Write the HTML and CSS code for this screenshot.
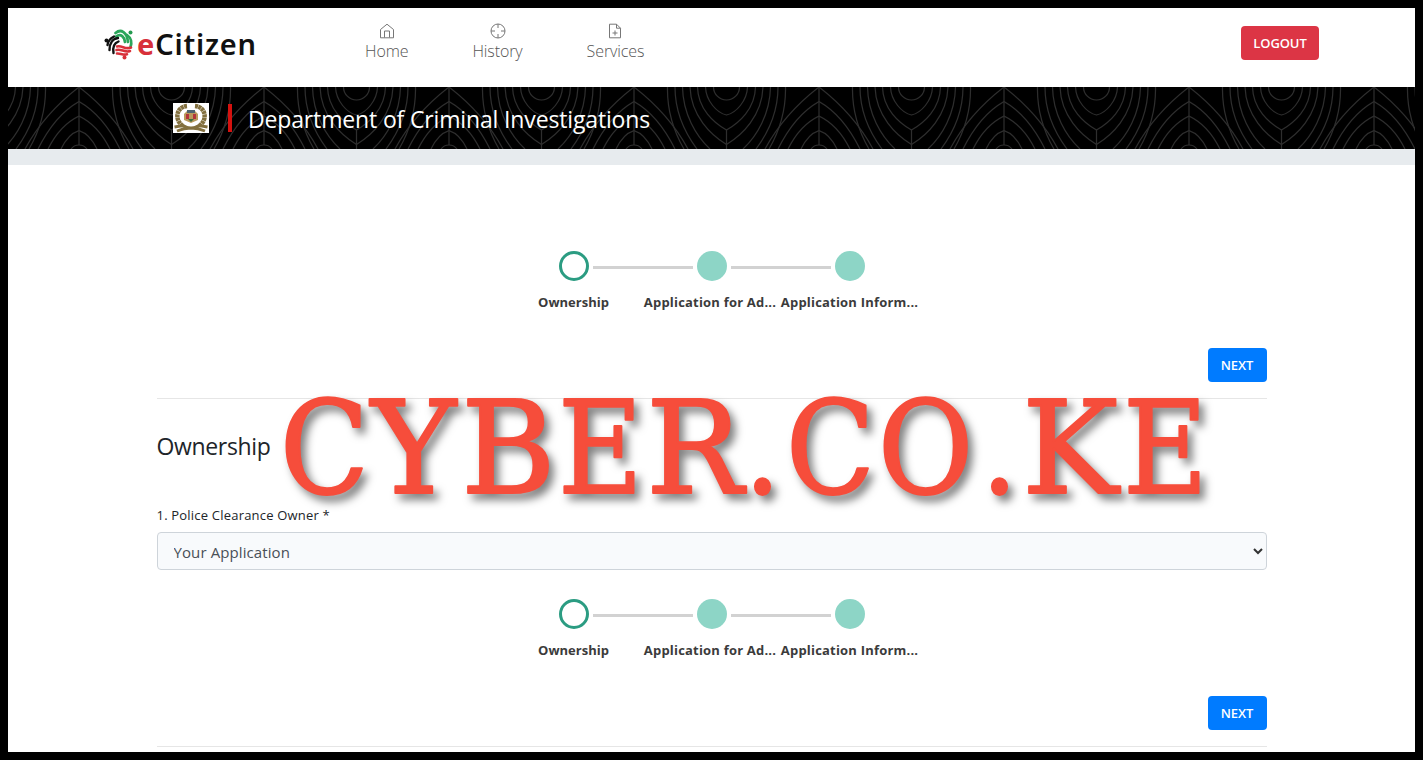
FILE: index.html
```
<!DOCTYPE html>
<html lang="en">
<head>
  <meta charset="UTF-8" />
  <meta name="viewport" content="width=device-width, initial-scale=1.0"/>
  <title>eCitizen - Department of Criminal Investigations</title>
  <link rel="stylesheet" href="styles.css">
</head>
<body>
  <header class="topbar">
    <a href="#" class="logo">
      <svg class="logo-mark" viewBox="0 0 32 32" fill="none" stroke-linecap="round">
        <circle cx="26.500" cy="4.500" r="2" fill="#249a50"/>
        <circle cx="2.500" cy="12.500" r="2" fill="#111"/>
        <circle cx="20.500" cy="29.500" r="2" fill="#d8303a"/>
        <g stroke="#2aa65a" stroke-width="2.700">
          <path d="M11.500 5C17 .5 23 4 24 14"/>
          <path d="M12 8.500C17 5 20.500 9 21 14"/>
          <path d="M23 7C27.500 10 28 15 26.500 19"/>
        </g>
        <g stroke="#111" stroke-width="2.400">
          <path d="M14 10C9 10.500 5.500 15 5.500 22"/>
          <path d="M14.500 13.500C10.500 15 8.500 19 9.500 25"/>
          <path d="M10 8.500C6 10.500 4 13 3.500 17"/>
        </g>
        <g stroke="#d8303a" stroke-width="2.600">
          <path d="M13 18.500C18 17 21 22 27 19.500"/>
          <path d="M12.500 22C17 20.500 21 25 26 23"/>
          <path d="M13 25.500C16 25 19 27.500 23 26.300"/>
        </g>
      </svg>
      <span class="logo-text"><span class="logo-e">e</span>Citizen</span>
    </a>
    <nav class="menu">
      <a href="#">
        <svg viewBox="0 0 16 16"><path d="M1.500 6.500L8 1.200l6.500 5.300v8.300h-13zM5.500 14.500V8h5v6.500"/></svg>
        Home
      </a>
      <a href="#">
        <svg viewBox="0 0 16 16"><circle cx="8" cy="8" r="7"/><path d="M8 1v4M8 11v4M1 8h4M11 8h4"/></svg>
        History
      </a>
      <a href="#">
        <svg viewBox="0 0 16 16"><path d="M9.500 1.200H2.500v13.600h11V5.200zM9.500 1.200v4h4M8 7.500v5M5.500 10h5"/></svg>
        Services
      </a>
    </nav>
    <button class="btn btn-logout">LOGOUT</button>
  </header>

  <section class="banner">
    <svg class="banner-pattern" width="100%" height="62">
      <defs>
        <pattern id="leaves" x="71" width="185" height="62" patternUnits="userSpaceOnUse">
          <g fill="none" stroke="#2e2e2e" stroke-width="1.200">
            <path d="M0 0V58M185 0V58M92.500 43V62"/>
            <path d="M0 0Q35 27 54 62M0 14.500Q24 28 41 62M0 29Q19 38 31 62M0 43.500Q11 47 18 62M0 58Q5 58 8 62"/>
            <path d="M185 0Q150 27 131 62M185 14.500Q161 28 144 62M185 29Q166 38 154 62M185 43.500Q174 47 167 62M185 58Q180 58 177 62"/>
            <path d="M79.500 0a13 13 0 0 0 26 0"/>
            <path d="M71.500 0C72 14 83 26 92.500 28C102 26 113 14 113.500 0"/>
            <path d="M63.500 0C64 22 80 36 92.500 43C105 36 121 22 121.500 0"/>
            <path d="M56 0C57 29 77 48 92.500 57.500C108 48 128 29 129 0"/>
            <path d="M48.500 0C49 27 62 49 76 62M136.500 0C136 27 123 49 109 62"/>
            <path d="M41 0C41 27 51 46 63 62M144 0C144 27 134 46 122 62"/>
            <path d="M33.500 0C33 24 39 43 50 62M151.500 0C152 24 146 43 135 62"/>
          </g>
        </pattern>
      </defs>
      <rect width="100%" height="62" fill="url(#leaves)"/>
    </svg>
    <svg class="crest" viewBox="0 0 36 30">
      <rect width="36" height="30" fill="#fff"/>
      <g fill="none" stroke="#83703f">
        <path d="M14 3C3 4 1 17 10 23M22 3C33 4 35 17 26 23" stroke-width="4.500" stroke-dasharray="3 .4"/>
        <path d="M1.500 24L10 22.500Q18 28 26 22.500L34.500 24M4 28Q18 22 32 28" stroke-width="2.800"/>
      </g>
      <path d="M11 11l3-3h8l3 3v6l-7 3-7-3z" fill="#b99a5c"/>
      <path d="M14 7h8v3h-8z" fill="#4e6470"/>
      <path d="M13 11h3v5h-3zM20 11h3v5h-3z" fill="#b3353a"/>
      <path d="M15 16h6l-3 3z" fill="#3f6b3f"/>
    </svg>
    <span class="banner-line"></span>
    <h1>Department of Criminal Investigations</h1>
  </section>
  <div class="strip"></div>

  <main class="form">
    <ol class="steps">
      <li class="active"><i></i><span>Ownership</span></li>
      <li><i></i><span>Application for Ad...</span></li>
      <li><i></i><span>Application Inform...</span></li>
    </ol>
    <div class="actions"><button class="btn btn-next">NEXT</button></div>

    <h2>Ownership</h2>
    <label for="owner">1. Police Clearance Owner *</label>
    <div class="select-wrap">
      <select id="owner">
        <option>Your Application</option>
      </select>
      <svg class="arrow" viewBox="0 0 10 7"><path d="M1 1l4 4 4-4"/></svg>
    </div>

    <ol class="steps steps-bottom">
      <li class="active"><i></i><span>Ownership</span></li>
      <li><i></i><span>Application for Ad...</span></li>
      <li><i></i><span>Application Inform...</span></li>
    </ol>
    <div class="actions"><button class="btn btn-next">NEXT</button></div>
  </main>

  <svg class="watermark" viewBox="0 0 960 150">
    <text y="113.500"><tspan x="5">C</tspan><tspan class="wide" x="96 186">YB</tspan><tspan x="283">E</tspan><tspan class="wide" x="371">R</tspan><tspan x="469 511 603 706">.CO.</tspan><tspan class="wide" x="747">K</tspan><tspan x="848">E</tspan></text>
  </svg>
</body>
</html>
```

FILE: styles.css
```
* {
  box-sizing: border-box;
}
body {
  margin: 0;
  height: 760px;
  overflow: hidden;
  border: 8px solid #000;
  background: #fff;
  color: #212529;
  font-family: "Open Sans", "Noto Sans", sans-serif;
  position: relative;
}
a {
  text-decoration: none;
}

/* top bar */
.topbar {
  height: 79px;
  padding: 0 96px;
  display: flex;
  align-items: flex-start;
}
.logo {
  display: flex;
  width: 250px;
  padding-top: 20px;
}
.logo-mark {
  width: 32px;
  height: 32px;
}
.logo-text {
  margin-left: 1px;
  font-family: "Noto Sans", sans-serif;
  font-size: 29px;
  font-weight: 600;
  line-height: 32px;
  letter-spacing: 0.8px;
  color: #111;
}
.logo-e {
  color: #d8303a;
  font-weight: 700;
}
.menu {
  display: flex;
  gap: 64px;
  padding: 15px 0 0 11px;
}
.menu a {
  display: flex;
  flex-direction: column;
  align-items: center;
  font-size: 16px;
  font-weight: 300;
  line-height: 24px;
  letter-spacing: -0.1px;
  color: #555;
}
.menu svg {
  width: 16px;
  height: 16px;
  fill: none;
  stroke: #777;
  stroke-width: 1;
}
.btn {
  height: 34px;
  border: none;
  border-radius: 4px;
  padding: 0;
  color: #fff;
  font-family: inherit;
  font-size: 13px;
  font-weight: 600;
  letter-spacing: -0.1px;
  cursor: pointer;
}
.btn-logout {
  width: 78px;
  margin: 18px 0 0 auto;
  background: #dc3545;
}
.btn-next {
  width: 59px;
  background: #007bff;
}

/* department banner */
.banner {
  height: 62px;
  position: relative;
  display: flex;
  align-items: center;
  padding-left: 165px;
  background: #000;
}
.banner-pattern {
  position: absolute;
  left: 0;
  top: 0;
}
.crest {
  position: relative;
  width: 36px;
  height: 30px;
}
.banner-line {
  position: relative;
  width: 4px;
  height: 28px;
  margin: 0 16px 0 19px;
  background: #d4120f;
}
.banner h1 {
  position: relative;
  margin: 1px 0 0;
  font-size: 23px;
  font-weight: 400;
  line-height: 30px;
  letter-spacing: -0.15px;
  color: #fff;
}
.strip {
  height: 16px;
  background: #e7ebee;
}

/* form */
.form {
  width: 1110px;
  margin: 0 auto;
  padding-top: 86px;
}
.steps {
  list-style: none;
  margin: 0 auto;
  padding: 0;
  width: 414px;
  display: grid;
  grid-template-columns: repeat(3, 138px);
}
.steps li {
  position: relative;
  display: flex;
  flex-direction: column;
  align-items: center;
}
.steps i {
  width: 30px;
  height: 30px;
  border-radius: 50%;
  background: #8dd5c6;
}
.steps .active i {
  background: #fff;
  border: 3px solid #2b9c82;
}
.steps li + li::before {
  content: "";
  position: absolute;
  left: -50px;
  top: 15px;
  width: 100px;
  height: 3px;
  background: #d2d2d2;
}
.steps span {
  margin-top: 11px;
  height: 20px;
  font-size: 13px;
  font-weight: 700;
  line-height: 20px;
  white-space: nowrap;
  color: #3b3b3b;
}
.steps li + li span {
  letter-spacing: 0.2px;
}
.steps li:nth-child(2) span {
  padding-right: 3px;
}
.actions {
  display: flex;
  justify-content: flex-end;
  margin-top: 36px;
  padding-bottom: 16px;
  border-bottom: 1px solid #e6e6e6;
}
.form h2 {
  margin: 29px 0 0;
  font-size: 23px;
  font-weight: 400;
  line-height: 36px;
  letter-spacing: -0.35px;
}
.form label {
  display: block;
  margin-top: 41px;
  font-size: 13px;
  font-weight: 500;
  line-height: 20px;
  letter-spacing: 0.2px;
}
.select-wrap {
  position: relative;
  margin-top: 7px;
}
.form select {
  display: block;
  width: 100%;
  height: 38px;
  padding: 2px 16px 0;
  appearance: none;
  border: 1px solid #ced4da;
  border-radius: 4px;
  background: #f8fafc;
  color: #495057;
  font-family: inherit;
  font-size: 15px;
  letter-spacing: 0.1px;
}
.arrow {
  position: absolute;
  right: 4px;
  top: 16px;
  width: 10px;
  height: 7px;
  fill: none;
  stroke: #333;
  stroke-width: 2;
}
.steps-bottom {
  margin-top: 29px;
}

/* site name laid over the page */
.watermark {
  position: absolute;
  left: 267px;
  top: 371px;
  width: 960px;
  height: 150px;
  overflow: visible;
  pointer-events: none;
}
.watermark text {
  font-family: "DejaVu Serif Condensed", "DejaVu Serif", serif;
  font-stretch: condensed;
  font-size: 129px;
  fill: #f64d3b;
  stroke: #f64d3b;
  stroke-width: 2;
  stroke-linejoin: round;
  filter: drop-shadow(5px 6px 4px rgba(0, 0, 0, 0.5));
}
.watermark .wide {
  font-family: "DejaVu Serif", serif;
  font-stretch: normal;
}
```
